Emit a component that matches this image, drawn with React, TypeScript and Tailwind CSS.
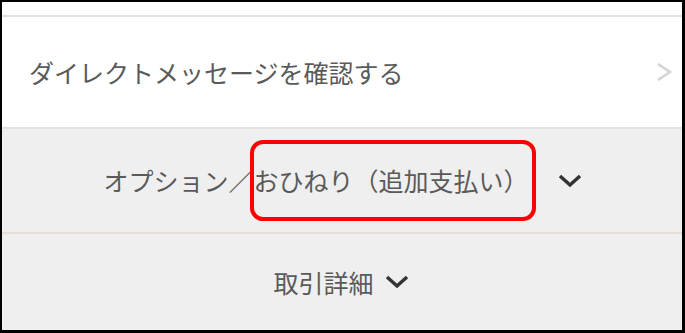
export default function App() {
  const font = { fontFamily: '"Noto Sans CJK JP", "Noto Sans", sans-serif' };
  return (
    <div
      className="w-[685px] h-[333px] border-t-2 border-l-2 border-r-[3px] border-b-[3px] border-black bg-white flex flex-col text-[#5a5a5a] overflow-hidden"
      style={font}
    >
      <div className="h-[15px] border-b-2 border-[#e8e0da]" />
      <div className="h-[112px] bg-white border-b-2 border-[#e8e0da] flex items-center pl-[27px] pr-[9px]">
        <span className="flex-1 text-[25px] leading-none">ダイレクトメッセージを確認する</span>
        <svg width="17" height="20" viewBox="0 0 17 20" fill="none">
          <path d="M2 2 L14 10 L2 18" stroke="#d3d3d3" strokeWidth="2.6" />
        </svg>
      </div>
      <div className="relative h-[105px] bg-[#efefef] border-b-2 border-[#e6ddd6] flex items-center justify-center gap-[28px] pl-[2px]">
        <span className="text-[25px] leading-none">オプション／おひねり（追加支払い）</span>
        <svg width="26" height="16" viewBox="0 0 26 16" fill="none">
          <path d="M3 3 L13 12 L23 3" stroke="#333" strokeWidth="3.5" />
        </svg>
        <div className="absolute left-[248px] top-[11px] w-[286px] h-[81px] border-[4px] border-[#ff0000] rounded-[13px]" />
      </div>
      <div className="flex-1 bg-[#efefef] flex items-center justify-center gap-[11px] pr-[2px]">
        <span className="text-[25px] leading-none">取引詳細</span>
        <svg width="24" height="14" viewBox="0 0 24 14" fill="none">
          <path d="M2 2 L12 11 L22 2" stroke="#333" strokeWidth="3.5" />
        </svg>
      </div>
    </div>
  );
}
